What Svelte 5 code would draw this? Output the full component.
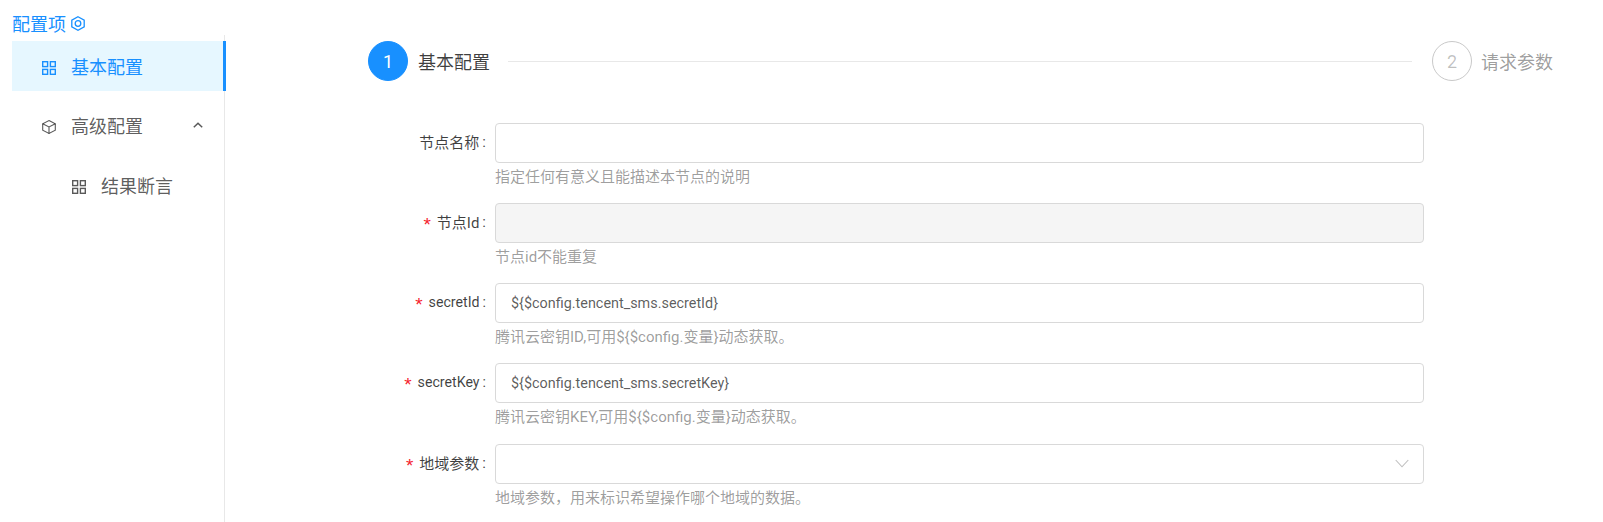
<script>
  const fields = [
    { label: '节点名称', value: '', help: '指定任何有意义且能描述本节点的说明' },
    { label: '节点Id', value: '', help: '节点id不能重复', required: true, disabled: true },
    { label: 'secretId', value: '${$config.tencent_sms.secretId}', help: '腾讯云密钥ID,可用${$config.变量}动态获取。', required: true, latin: true },
    { label: 'secretKey', value: '${$config.tencent_sms.secretKey}', help: '腾讯云密钥KEY,可用${$config.变量}动态获取。', required: true, latin: true },
    { label: '地域参数', value: '', help: '地域参数，用来标识希望操作哪个地域的数据。', required: true, select: true }
  ];
</script>

{#snippet gridIcon()}
  <svg class="icon" viewBox="0 0 14 14" fill="none" stroke="currentColor" stroke-width="1.4">
    <rect x=".7" y=".7" width="4.9" height="4.9" />
    <rect x="8.4" y=".7" width="4.9" height="4.9" />
    <rect x=".7" y="8.4" width="4.9" height="4.9" />
    <rect x="8.4" y="8.4" width="4.9" height="4.9" />
  </svg>
{/snippet}

<div class="page">
  <aside class="sidebar">
    <div class="title">
      配置项
      <svg class="title-icon" viewBox="0 0 14 15" fill="none" stroke="currentColor" stroke-width="1.3">
        <path d="M7 .8 13.2 4.1V10.9L7 14.2 .8 10.9V4.1Z" />
        <circle cx="7" cy="7.5" r="2.8" />
      </svg>
    </div>
    <nav class="menu">
      <div class="item active">
        {@render gridIcon()}
        <span>基本配置</span>
      </div>
      <div class="item">
        <svg class="icon" viewBox="0 0 14 14" fill="none" stroke="currentColor" stroke-width="1.1">
          <path d="M7 .6 13.3 3.8V10.2L7 13.4 .7 10.2V3.8Z" />
          <path d="M.7 3.8 7 7 13.3 3.8M7 7V13.4" />
        </svg>
        <span>高级配置</span>
        <svg class="chevron" viewBox="0 0 10 6" fill="none" stroke="currentColor" stroke-width="1.5">
          <path d="M.8 5.3 5 1.2 9.2 5.3" />
        </svg>
      </div>
      <div class="item sub">
        {@render gridIcon()}
        <span>结果断言</span>
      </div>
    </nav>
  </aside>

  <main class="content">
    <div class="steps">
      <div class="circle current">1</div>
      <div class="step-title">基本配置</div>
      <div class="line"></div>
      <div class="circle">2</div>
      <div class="step-title wait">请求参数</div>
    </div>

    <form class="form">
      {#each fields as f}
        <label class="label" class:latin={f.latin} for={f.label}>
          {#if f.required}<span class="star">*</span>{/if}{f.label}<span class="colon">:</span>
        </label>
        <div class="control">
          {#if f.select}
            <div class="select">
              <svg class="arrow" viewBox="0 0 14 9" fill="none" stroke="currentColor" stroke-width="1.1">
                <path d="M.7 1 7 7.8 13.3 1" />
              </svg>
            </div>
          {:else}
            <input id={f.label} class="input" value={f.value} disabled={f.disabled} />
          {/if}
          <div class="help">{f.help}</div>
        </div>
      {/each}
    </form>
  </main>
</div>

<style>
  :global(body) {
    margin: 0;
    background: #fff;
  }
  .page {
    display: flex;
    height: 522px;
    overflow: hidden;
    font-family: Roboto, "Noto Sans CJK SC", sans-serif;
    font-size: 15px;
    color: rgba(0, 0, 0, 0.65);
  }
  .sidebar {
    width: 214px;
    margin-left: 12px;
    flex-shrink: 0;
    display: flex;
    flex-direction: column;
  }
  .title {
    display: flex;
    align-items: center;
    gap: 5px;
    height: 24px;
    margin-top: 11px;
    font-size: 18px;
    color: #1890ff;
  }
  .title-icon {
    width: 14px;
    height: 15px;
    margin-top: 1px;
  }
  .menu {
    flex: 1;
    padding-top: 6px;
    margin-right: 1px;
    border-right: 1px solid #e8e8e8;
  }
  .item {
    display: flex;
    align-items: center;
    gap: 15px;
    height: 50px;
    margin-bottom: 10px;
    padding-left: 30px;
    font-size: 18px;
    position: relative;
  }
  .item.active {
    margin-right: -2px;
    margin-bottom: 9px;
    background: #e6f7ff;
    color: #1890ff;
    box-shadow: inset -3px 0 0 #1890ff;
  }
  .item.sub {
    padding-left: 60px;
  }
  .icon {
    width: 14px;
    height: 14px;
    flex-shrink: 0;
    margin-top: 4px;
  }
  .chevron {
    position: absolute;
    right: 21px;
    top: 22px;
    width: 10px;
    height: 6px;
  }
  .content {
    flex: 1;
    min-width: 0;
    padding: 41px 50px 0 142px;
  }
  .steps {
    display: flex;
    align-items: center;
    height: 40px;
  }
  .circle {
    box-sizing: border-box;
    width: 40px;
    height: 40px;
    border: 1px solid #c9c9c9;
    border-radius: 50%;
    display: flex;
    align-items: center;
    justify-content: center;
    font-size: 18px;
    color: rgba(0, 0, 0, 0.25);
    flex-shrink: 0;
  }
  .circle.current {
    background: #1890ff;
    border-color: #1890ff;
    color: #fff;
  }
  .step-title {
    margin-left: 10px;
    font-size: 18px;
    color: rgba(0, 0, 0, 0.75);
  }
  .step-title.wait {
    margin-left: 9px;
    color: rgba(0, 0, 0, 0.4);
  }
  .line {
    flex: 1;
    height: 1px;
    background: #e8e8e8;
    margin: 0 20px 0 18px;
  }
  .form {
    display: grid;
    grid-template-columns: 127px 929px;
    margin-top: 41.6px;
    row-gap: 15.25px;
    margin-left: -142px;
    padding-left: 142px;
  }
  .label {
    box-sizing: border-box;
    height: 40px;
    display: flex;
    align-items: center;
    justify-content: flex-end;
    padding: 0 9px 2px 0;
    white-space: pre;
    color: rgba(0, 0, 0, 0.75);
  }
  .label.latin {
    font-size: 14.2px;
  }
  .star {
    color: #f5222d;
    margin-right: 4px;
    font-family: "Liberation Mono", monospace;
    font-size: 19px;
    transform: translateY(4px);
  }
  .colon {
    margin-left: 3px;
  }
  .input,
  .select {
    display: block;
    box-sizing: border-box;
    width: 100%;
    height: 40px;
    padding: 0 15px;
    border: 1px solid #d9d9d9;
    border-radius: 4px;
    background: #fff;
    font: inherit;
    font-size: 14.4px;
    color: rgba(0, 0, 0, 0.65);
    outline: none;
  }
  .input:disabled {
    background: #f5f5f5;
  }
  .select {
    display: flex;
    align-items: center;
    justify-content: flex-end;
  }
  .arrow {
    width: 14px;
    height: 9px;
    color: #bfbfbf;
    margin-right: -1px;
  }
  .help {
    height: 22px;
    margin-top: 3px;
    line-height: 22px;
    color: rgba(0, 0, 0, 0.4);
    white-space: nowrap;
  }
</style>
